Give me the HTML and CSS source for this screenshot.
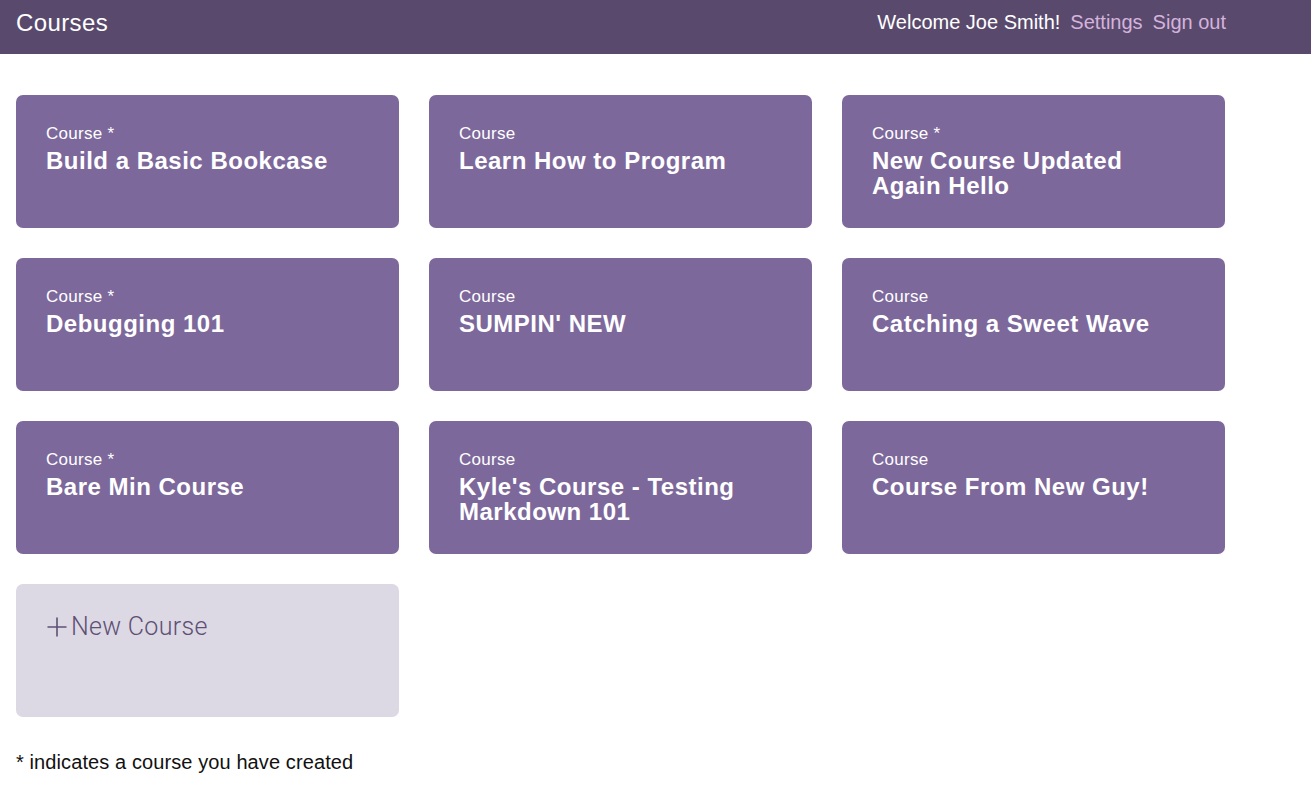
FILE: index.html
```html
<!DOCTYPE html>
<html>
<head>
<meta charset="utf-8">
<link rel="stylesheet" href="styles.css">
</head>
<body>
<header class="topbar">
  <div class="topbar-inner">
    <div class="brand">Courses</div>
    <nav class="user-nav">
      <span class="welcome">Welcome Joe Smith!</span>
      <a class="nav-link" href="#">Settings</a>
      <a class="nav-link" href="#">Sign out</a>
    </nav>
  </div>
</header>
<main class="content">
  <div class="grid">
    <a class="card" href="#"><div class="card-label">Course *</div><div class="card-title">Build a Basic Bookcase</div></a>
    <a class="card" href="#"><div class="card-label">Course</div><div class="card-title">Learn How to Program</div></a>
    <a class="card" href="#"><div class="card-label">Course *</div><div class="card-title">New Course Updated Again Hello</div></a>
    <a class="card" href="#"><div class="card-label">Course *</div><div class="card-title">Debugging 101</div></a>
    <a class="card" href="#"><div class="card-label">Course</div><div class="card-title">SUMPIN' NEW</div></a>
    <a class="card" href="#"><div class="card-label">Course</div><div class="card-title">Catching a Sweet Wave</div></a>
    <a class="card" href="#"><div class="card-label">Course *</div><div class="card-title">Bare Min Course</div></a>
    <a class="card" href="#"><div class="card-label">Course</div><div class="card-title">Kyle's Course - Testing Markdown 101</div></a>
    <a class="card" href="#"><div class="card-label">Course</div><div class="card-title">Course From New Guy!</div></a>
    <a class="card card-new" href="#">
      <span class="new-inner">
        <svg class="plus" width="22" height="22" viewBox="0 0 22 22"><path d="M11 1.5V20.5M1.5 11H20.5" stroke="#5e5074" stroke-width="1.6" fill="none"/></svg>
        <span>New Course</span>
      </span>
    </a>
  </div>
  <p class="footnote">* indicates a course you have created</p>
</main>
</body>
</html>
```
FILE: styles.css
```css
* { box-sizing: border-box; }
html, body { margin: 0; padding: 0; }
body {
  font-family: "Liberation Sans", Arial, sans-serif;
  background: #ffffff;
  color: #111111;
}
.topbar {
  background: #594a6d;
  height: 54px;
}
.topbar-inner {
  width: 1210px;
  margin-left: 16px;
  height: 54px;
  display: flex;
  align-items: flex-start;
  justify-content: space-between;
}
.brand {
  color: #ffffff;
  font-size: 24px;
  line-height: 28px;
  padding-top: 9px;
  letter-spacing: 0.4px;
}
.user-nav {
  display: flex;
  gap: 10px;
  font-size: 20px;
  line-height: 24px;
  padding-top: 10px;
}
.welcome { color: #ffffff; }
.nav-link {
  color: #d5b3dc;
  text-decoration: none;
}
.content {
  padding: 41px 0 0 16px;
}
.grid {
  display: grid;
  grid-template-columns: repeat(3, 383px);
  column-gap: 30px;
  row-gap: 30px;
  width: 1210px;
}
.card {
  display: block;
  height: 133px;
  background: #7d689b;
  border-radius: 7px;
  padding: 28px 30px 0 30px;
  color: #ffffff;
  text-decoration: none;
}
.card-label {
  font-size: 17px;
  line-height: 21px;
  letter-spacing: 0.3px;
}
.card-title {
  font-size: 24px;
  line-height: 25px;
  font-weight: bold;
  letter-spacing: 0.5px;
  margin-top: 4px;
}
.card-new {
  background: #dcd8e4;
  padding-top: 27px;
}
.new-inner {
  display: flex;
  align-items: center;
  gap: 3px;
  color: #5e5074;
  font-family: Roboto, "Liberation Sans", sans-serif;
  font-weight: 300;
  font-size: 25px;
  line-height: 32px;
  letter-spacing: 0.3px;
}
.plus { display: block; }
.footnote {
  margin: 33px 0 0 0;
  font-size: 20px;
  line-height: 24px;
  letter-spacing: 0.1px;
  color: #111111;
}
```
